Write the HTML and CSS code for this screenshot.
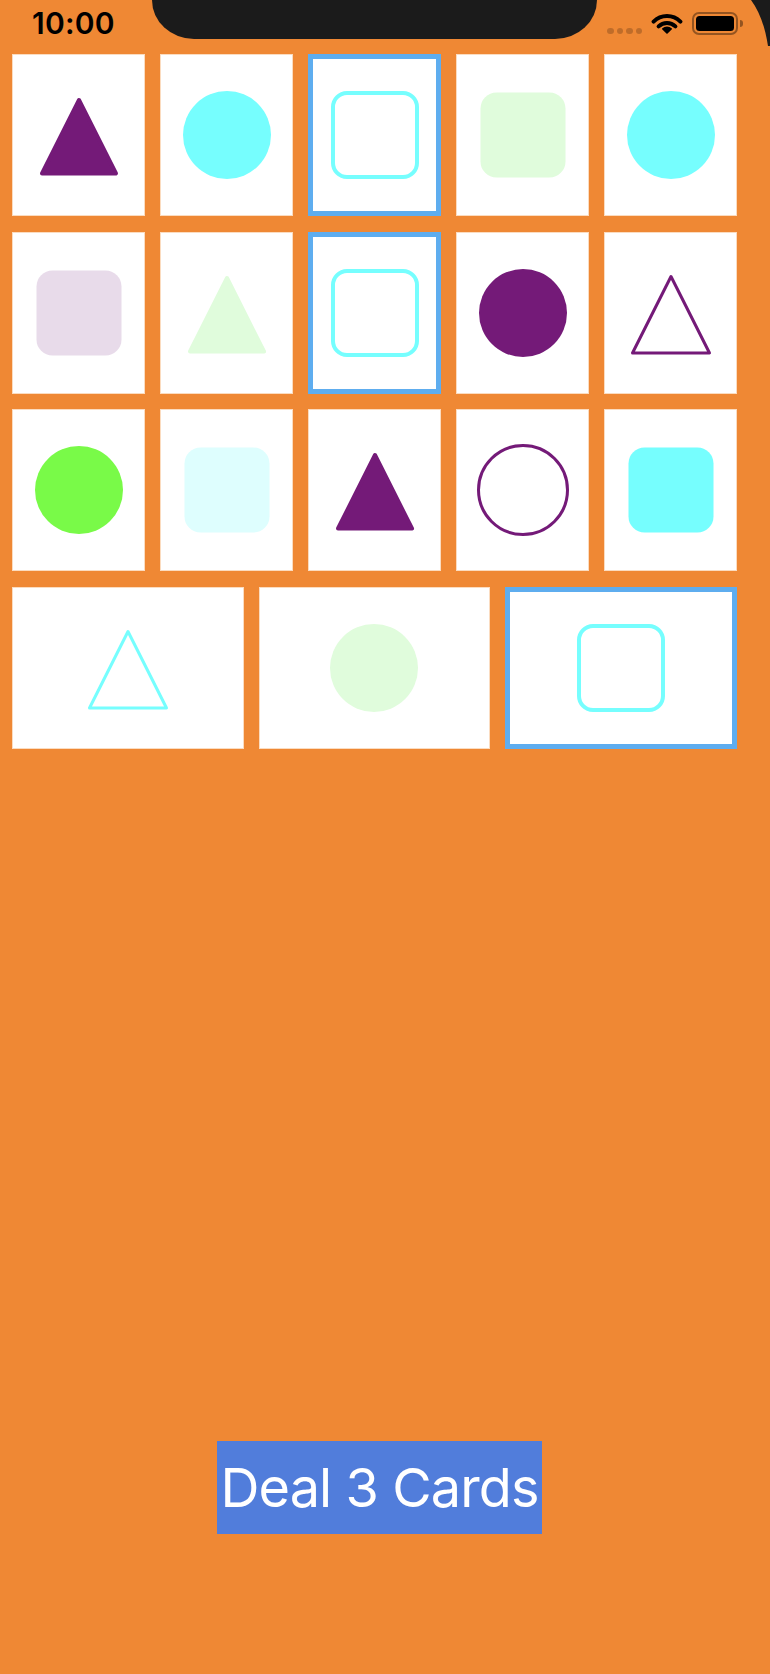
FILE: index.html
```html
<!DOCTYPE html>
<html>
<head>
<meta charset="utf-8">
<link rel="stylesheet" href="styles.css">
</head>
<body>
<div class="screen">
  <div class="status">
    <div class="time">10:00</div>
    <div class="notch"></div>
    <div class="status-right">
      <div class="signal"><span></span><span></span><span></span><span></span></div>
      <svg class="wifi" viewBox="0 0 32 22" width="32" height="22">
        <path d="M2.6,9.6 A19,19 0 0 1 29.4,9.6" fill="none" stroke="#000" stroke-width="4" stroke-linecap="round"/>
        <path d="M7.6,14.4 A12,12 0 0 1 24.4,14.4" fill="none" stroke="#000" stroke-width="4" stroke-linecap="round"/>
        <path d="M16,21 L11.9,16.9 A5.8,5.8 0 0 1 20.1,16.9 Z" fill="#000" stroke="#000" stroke-width="1.6" stroke-linejoin="round"/>
      </svg>
      <div class="battery"><div class="battery-body"><div class="battery-fill"></div></div><div class="battery-cap"></div></div>
    </div>
    <svg class="corner" viewBox="0 0 20 46" width="20" height="46">
      <path d="M1,0 C9,11 15,26 18,46 L20,46 L20,0 Z" fill="#1b1b1b"/>
    </svg>
  </div>

  <div class="board">
    <div class="row row-5">
      <div class="card"><svg class="shape c-purple" viewBox="-50 -50 100 100"><path d="M0,-35 L37,38.5 L-37,38.5 Z" fill="currentColor" stroke="currentColor" stroke-width="4" stroke-linejoin="round"/></svg></div>
      <div class="card"><svg class="shape c-cyan" viewBox="-50 -50 100 100"><circle r="44" fill="currentColor"/></svg></div>
      <div class="card selected"><svg class="shape c-cyan" viewBox="-50 -50 100 100"><rect x="-42" y="-42" width="84" height="84" rx="14" fill="none" stroke="currentColor" stroke-width="4"/></svg></div>
      <div class="card"><svg class="shape c-lgreen" viewBox="-50 -50 100 100"><rect x="-42.5" y="-42.5" width="85" height="85" rx="16" fill="currentColor"/></svg></div>
      <div class="card"><svg class="shape c-cyan" viewBox="-50 -50 100 100"><circle r="44" fill="currentColor"/></svg></div>
    </div>
    <div class="row row-5">
      <div class="card"><svg class="shape c-lpurple" viewBox="-50 -50 100 100"><rect x="-42.5" y="-42.5" width="85" height="85" rx="16" fill="currentColor"/></svg></div>
      <div class="card"><svg class="shape c-lgreen" viewBox="-50 -50 100 100"><path d="M0,-35 L37,38.5 L-37,38.5 Z" fill="currentColor" stroke="currentColor" stroke-width="4" stroke-linejoin="round"/></svg></div>
      <div class="card selected"><svg class="shape c-cyan" viewBox="-50 -50 100 100"><rect x="-42" y="-42" width="84" height="84" rx="14" fill="none" stroke="currentColor" stroke-width="4"/></svg></div>
      <div class="card"><svg class="shape c-purple" viewBox="-50 -50 100 100"><circle r="44" fill="currentColor"/></svg></div>
      <div class="card"><svg class="shape c-purple" viewBox="-50 -50 100 100"><path d="M0,-36.5 L38.5,40 L-38.5,40 Z" fill="none" stroke="currentColor" stroke-width="3" stroke-linejoin="round"/></svg></div>
    </div>
    <div class="row row-5">
      <div class="card"><svg class="shape c-green" viewBox="-50 -50 100 100"><circle r="44" fill="currentColor"/></svg></div>
      <div class="card"><svg class="shape c-lcyan" viewBox="-50 -50 100 100"><rect x="-42.5" y="-42.5" width="85" height="85" rx="16" fill="currentColor"/></svg></div>
      <div class="card"><svg class="shape c-purple" viewBox="-50 -50 100 100"><path d="M0,-35 L37,38.5 L-37,38.5 Z" fill="currentColor" stroke="currentColor" stroke-width="4" stroke-linejoin="round"/></svg></div>
      <div class="card"><svg class="shape c-purple" viewBox="-50 -50 100 100"><circle r="44.5" fill="none" stroke="currentColor" stroke-width="3"/></svg></div>
      <div class="card"><svg class="shape c-cyan" viewBox="-50 -50 100 100"><rect x="-42.5" y="-42.5" width="85" height="85" rx="16" fill="currentColor"/></svg></div>
    </div>
    <div class="row row-3">
      <div class="card"><svg class="shape c-cyan" viewBox="-50 -50 100 100"><path d="M0,-36.5 L38.5,40 L-38.5,40 Z" fill="none" stroke="currentColor" stroke-width="3" stroke-linejoin="round"/></svg></div>
      <div class="card"><svg class="shape c-lgreen" viewBox="-50 -50 100 100"><circle r="44" fill="currentColor"/></svg></div>
      <div class="card selected"><svg class="shape c-cyan" viewBox="-50 -50 100 100"><rect x="-42" y="-42" width="84" height="84" rx="14" fill="none" stroke="currentColor" stroke-width="4"/></svg></div>
    </div>
  </div>

  <div class="actions">
    <button class="deal">Deal 3 Cards</button>
  </div>
</div>
</body>
</html>
```

FILE: styles.css
```css
* { box-sizing: border-box; }
html, body { margin: 0; padding: 0; }
body {
  background: #ef8834;
  font-family: Inter, "Noto Sans", "Liberation Sans", sans-serif;
}
.screen {
  width: 770px;
  height: 1674px;
  display: flex;
  flex-direction: column;
  overflow: hidden;
}
.status {
  position: relative;
  height: 54px;
  display: flex;
  align-items: flex-start;
  justify-content: space-between;
  flex-shrink: 0;
}
.time {
  padding: 8px 0 0 32px;
  font-size: 30px;
  line-height: 30px;
  font-weight: 600;
  color: #000;
  letter-spacing: 0.2px;
}
.notch {
  position: absolute;
  left: 152px;
  top: 0;
  width: 445px;
  height: 39px;
  background: #1b1b1b;
  border-radius: 0 0 42px 42px / 0 0 39px 39px;
}
.status-right {
  display: flex;
  align-items: flex-start;
  padding: 12px 27px 0 0;
}
.signal {
  display: flex;
  gap: 3px;
  margin-top: 15.5px;
  margin-right: 9px;
}
.signal span {
  width: 6.5px;
  height: 6.5px;
  border-radius: 50%;
  background: rgba(0, 0, 0, 0.2);
}
.wifi {
  display: block;
  margin-top: 0;
  margin-right: 9px;
}
.battery {
  display: flex;
  align-items: center;
  margin-top: -0.5px;
}
.battery-body {
  width: 46px;
  height: 23px;
  border: 2px solid rgba(0, 0, 0, 0.38);
  border-radius: 7px;
  padding: 2px;
}
.battery-fill {
  width: 100%;
  height: 100%;
  background: #000;
  border-radius: 3.5px;
}
.battery-cap {
  width: 3px;
  height: 7px;
  margin-left: 2px;
  background: rgba(0, 0, 0, 0.38);
  border-radius: 0 3px 3px 0;
}
.corner {
  position: absolute;
  right: 0;
  top: 0;
}
.board {
  display: flex;
  flex-direction: column;
  gap: 15.5px;
  width: 725px;
  margin-left: 12px;
  margin-top: 0.3px;
}
.row {
  display: grid;
  gap: 15px;
  height: 162px;
}
.row-5 { grid-template-columns: repeat(5, 1fr); }
.row-3 { grid-template-columns: repeat(3, 1fr); }
.card {
  background: #fff;
  display: flex;
  align-items: center;
  justify-content: center;
  box-shadow: inset 0 0 0 1px #fbdcc0;
}
.card.selected {
  border: 5.5px solid #5eadef;
  box-shadow: none;
}
.shape {
  width: 100px;
  height: 100px;
  display: block;
  flex-shrink: 0;
}
.c-purple { color: #741a78; }
.c-cyan { color: #76fefe; }
.c-lgreen { color: #e0fcdc; }
.c-lpurple { color: #e8dbea; }
.c-lcyan { color: #defefe; }
.c-green { color: #79fa48; }
.actions {
  display: flex;
  justify-content: center;
  padding-right: 11px;
  margin-top: 692px;
}
.deal {
  width: 325px;
  height: 93px;
  padding: 0;
  border: none;
  border-radius: 0;
  background: #517ddb;
  color: #fff;
  font-family: Inter, "Noto Sans", "Liberation Sans", sans-serif;
  font-size: 54px;
  font-weight: 400;
  line-height: 93px;
  letter-spacing: -0.9px;
  white-space: nowrap;
}
```
